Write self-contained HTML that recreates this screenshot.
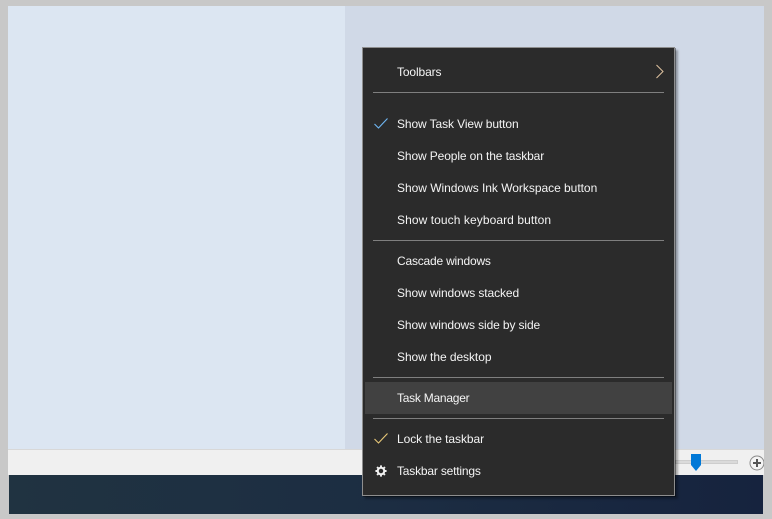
<!DOCTYPE html>
<html><head><meta charset="utf-8"><style>
html,body{margin:0;padding:0;width:772px;height:519px;overflow:hidden;background:#c8c8c8}
body{position:relative;font-family:"Liberation Sans",sans-serif}
.a{position:absolute}
.t{position:absolute;left:397px;color:#f4f4f4;font-size:12px;line-height:16px;white-space:nowrap}
.s{position:absolute;left:373px;width:291px;height:1px;background:#7f7f7f}
</style></head><body>
<div class="a" style="left:8px;top:6px;width:337px;height:444px;background:#dce6f2"></div>
<div class="a" style="left:345px;top:6px;width:419px;height:444px;background:#d0d9e7"></div>
<div class="a" style="left:8px;top:449px;width:756px;height:1px;background:#d8d8d8"></div>
<div class="a" style="left:8px;top:450px;width:756px;height:25px;background:#f0f0f0"></div>
<div class="a" style="left:9px;top:475px;width:754px;height:39px;background:linear-gradient(90deg,#203341,#1c2d42 50%,#16233e)"></div>
<div class="a" style="left:675px;top:460px;width:61px;height:2px;background:#dadada;border:1px solid #cdcdcd;box-sizing:content-box"></div>
<svg class="a" style="left:690px;top:454px" width="12" height="18"><path d="M1 0H11V11L6 17L1 11Z" fill="#0078d7"/></svg>
<svg class="a" style="left:748px;top:454px" width="16" height="18"><circle cx="9" cy="9" r="7" fill="#f4f4f4" stroke="#8a8a8a"/><path d="M5 9H13M9 5V13" stroke="#555" stroke-width="2"/></svg>
<div class="a" style="left:362px;top:47px;width:311px;height:447px;background:#2b2b2b;border:1px solid #8e8e8e;box-shadow:1px 1px 0 rgba(0,0,0,.38),3px 3px 2px rgba(0,0,0,.3)"></div>
<div class="a" style="left:365px;top:382px;width:307px;height:32px;background:#414141"></div>
<div class="s" style="top:92px"></div><div class="s" style="top:240px"></div><div class="s" style="top:377px"></div><div class="s" style="top:418px"></div>
<div class="t" style="top:64px;letter-spacing:-.12px">Toolbars</div>
<div class="t" style="top:116px;letter-spacing:-.1px">Show Task View button</div>
<div class="t" style="top:148px;letter-spacing:-.115px">Show People on the taskbar</div>
<div class="t" style="top:180px;letter-spacing:-.03px">Show Windows Ink Workspace button</div>
<div class="t" style="top:212px;letter-spacing:.08px">Show touch keyboard button</div>
<div class="t" style="top:253px;letter-spacing:-.2px">Cascade windows</div>
<div class="t" style="top:285px;letter-spacing:-.1px">Show windows stacked</div>
<div class="t" style="top:317px;letter-spacing:-.12px">Show windows side by side</div>
<div class="t" style="top:349px;letter-spacing:-.06px">Show the desktop</div>
<div class="t" style="top:390px;letter-spacing:-.25px">Task Manager</div>
<div class="t" style="top:431px;letter-spacing:-.06px">Lock the taskbar</div>
<div class="t" style="top:463px;letter-spacing:-.19px">Taskbar settings</div>
<svg class="a" style="left:655px;top:64px" width="10" height="15"><path d="M1.5 1L8 7.5L1.5 14" fill="none" stroke="#e0c4a0" stroke-width="1"/></svg>
<svg class="a" style="left:374px;top:118px" width="14" height="11"><path d="M0.5 6L4.5 10L13.5 0.5" fill="none" stroke="#6fb6f2" stroke-width="1.1"/></svg>
<svg class="a" style="left:374px;top:433px" width="14" height="11"><path d="M0.5 6L4.5 10L13.5 0.5" fill="none" stroke="#e8c878" stroke-width="1.1"/></svg>
<svg class="a" style="left:375px;top:465px" width="12" height="12" viewBox="0 0 14 14"><circle cx="7" cy="7" r="3.8" fill="none" stroke="#f2f2f2" stroke-width="2.4"/><path d="M7 0.5V3M7 11V13.5M0.5 7H3M11 7H13.5M2.4 2.4L4.2 4.2M9.8 9.8L11.6 11.6M2.4 11.6L4.2 9.8M9.8 4.2L11.6 2.4" stroke="#f2f2f2" stroke-width="2.2"/></svg>
</body></html>
